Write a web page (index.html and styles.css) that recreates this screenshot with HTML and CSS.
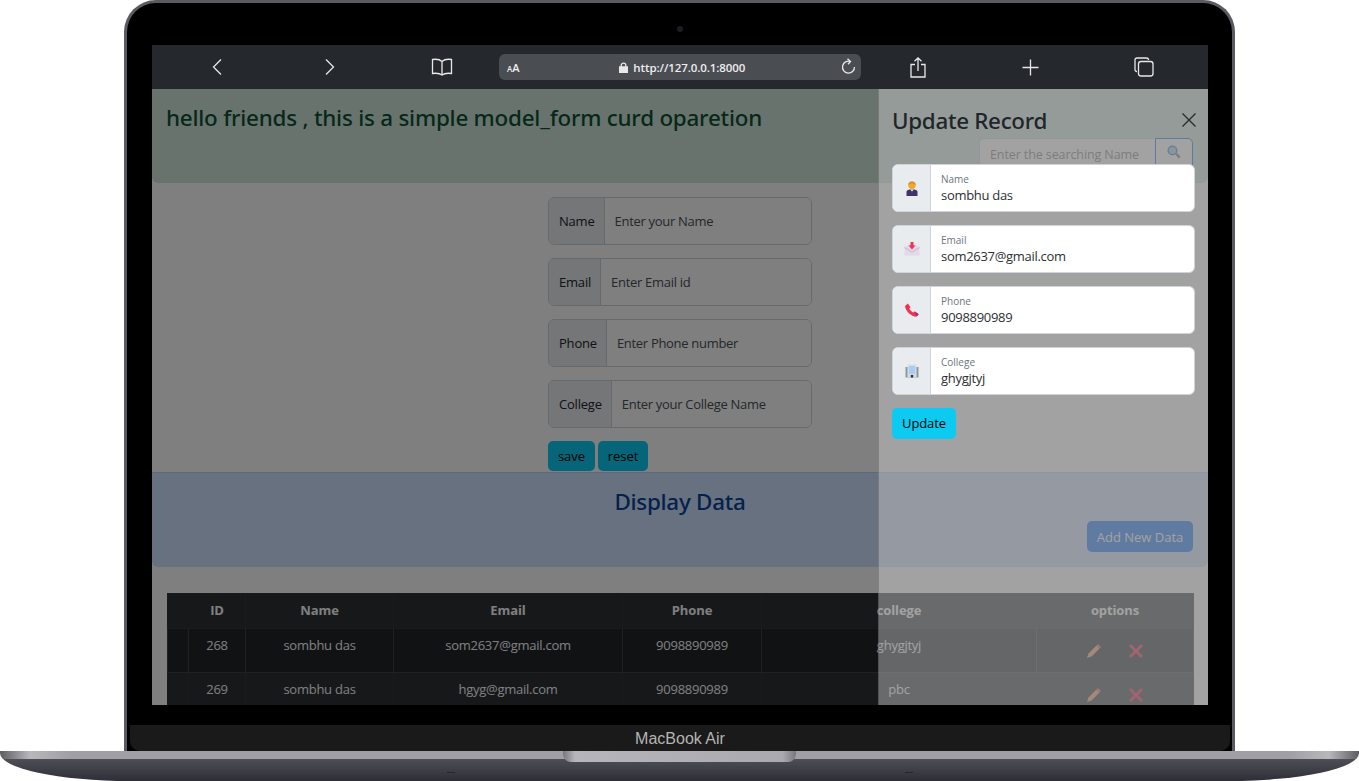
FILE: index.html
```html
<!DOCTYPE html>
<html>
<head>
    <title>Model form curd</title>
    <meta charset="UTF-8">
    <meta name="viewport" content="width=device-width, initial-scale=1.0">
    <link rel="stylesheet" href="styles.css">
</head>
<body>
<div class="laptop">
  <div class="lid">
    <div class="top-bezel"><span class="camera"></span></div>
    <div class="screen">
      <div class="toolbar">
        <div class="tool"><svg width="12" height="18" viewBox="0 0 12 18"><path d="M10 1.500 2.500 9 10 16.500"/></svg></div>
        <div class="tool"><svg width="12" height="18" viewBox="0 0 12 18"><path d="M2 1.500 9.500 9 2 16.500"/></svg></div>
        <div class="tool book"><svg width="22" height="18" viewBox="0 0 22 18"><path d="M11 3.500C9 1.500 5 1 1.500 1.500V15.500C5 15 9 15.500 11 17C13 15.500 17 15 20.500 15.500V1.500C17 1 13 1.500 11 3.500ZM11 3.500V17"/></svg></div>
        <div class="urlbar">
          <span class="aa"><small>A</small>A</span>
          <span class="url"><svg width="9" height="11" viewBox="0 0 9 11"><path class="solid" d="M0.500 5H8.500V10.500H0.500Z"/><path d="M2.200 5V3.200C2.200 0.500 6.800 0.500 6.800 3.200V5"/></svg>http://127.0.0.1:8000</span>
          <svg width="15" height="18" viewBox="0 0 15 18"><path d="M9.500 3.500A6 6 0 1 0 13.500 9"/><path d="M6.500 0.800 9.500 3.500 7 6.300"/></svg>
        </div>
        <div class="tool"><svg width="16" height="21" viewBox="0 0 16 21"><path d="M5 7.500H1V20H15V7.500H11M8 14V1M4.500 4.300 8 1 11.500 4.300"/></svg></div>
        <div class="tool"><svg width="17" height="17" viewBox="0 0 17 17"><path d="M8.500 0.500V16.500M0.500 8.500H16.500"/></svg></div>
        <div class="tool"><svg width="20" height="20" viewBox="0 0 20 20"><path d="M3 14.500C1.500 14.500 1 13.500 1 12.500V3C1 1.800 1.800 1 3 1H12.500C13.500 1 14.500 1.500 14.500 3"/><rect x="4.500" y="4.500" width="14.500" height="14.500" rx="2.500"/></svg></div>
      </div>

      <div class="page">
        <div class="alert-success">
          <h2 class="site-title">hello friends , this is a simple model_form curd oparetion</h2>
          <form class="search-form">
            <input class="search-input" type="text" placeholder="Enter the searching Name">
            <button class="search-btn" type="button">
              <svg width="14" height="14" viewBox="0 0 14 14"><path fill="#8a6a4a" d="M8.500 9.500 10 8l3.500 3.800-1.700 1.700z"/><circle cx="5.500" cy="5.500" r="5" fill="#2f7fd0"/><circle cx="5.500" cy="5.500" r="3.600" fill="#9fd6f5"/></svg>
            </button>
          </form>
        </div>

        <form class="add-form">
          <div class="input-group"><span class="input-label">Name</span><input type="text" placeholder="Enter your Name"></div>
          <div class="input-group"><span class="input-label">Email</span><input type="text" placeholder="Enter Email id"></div>
          <div class="input-group"><span class="input-label">Phone</span><input type="text" placeholder="Enter Phone number"></div>
          <div class="input-group"><span class="input-label">College</span><input type="text" placeholder="Enter your College Name"></div>
          <div class="form-btns">
            <button class="btn-info" type="button">save</button>
            <button class="btn-info reset" type="button">reset</button>
          </div>
        </form>

        <div class="alert-primary">
          <h3 class="display-title">Display Data</h3>
          <div class="add-row"><button class="btn-primary" type="button">Add New Data</button></div>
        </div>

        <div class="table-wrap">
          <table class="data-table">
            <colgroup>
              <col class="c0"><col class="c1"><col class="c2"><col class="c3"><col class="c4"><col class="c5"><col class="c6">
            </colgroup>
            <thead>
              <tr><th></th><th>ID</th><th>Name</th><th>Email</th><th>Phone</th><th>college</th><th>options</th></tr>
            </thead>
            <tbody>
              <tr class="odd">
                <td></td><td>268</td><td>sombhu das</td><td>som2637@gmail.com</td><td>9098890989</td><td>ghygjtyj</td>
                <td class="opts">
                  <svg width="16" height="16" viewBox="0 0 16 16"><path fill="#ffa860" d="M1 15 2.500 10.500 10.500 2.500 13.500 5.500 5.500 13.500z"/><path fill="#ff5a80" d="M10.500 2.500 12 1 15 4 13.500 5.500z"/></svg>
                  <svg width="16" height="16" viewBox="0 0 16 16"><path class="cross" d="M2 2 14 14M14 2 2 14"/></svg>
                </td>
              </tr>
              <tr>
                <td></td><td>269</td><td>sombhu das</td><td>hgyg@gmail.com</td><td>9098890989</td><td>pbc</td>
                <td class="opts">
                  <svg width="16" height="16" viewBox="0 0 16 16"><path fill="#ffa860" d="M1 15 2.500 10.500 10.500 2.500 13.500 5.500 5.500 13.500z"/><path fill="#ff5a80" d="M10.500 2.500 12 1 15 4 13.500 5.500z"/></svg>
                  <svg width="16" height="16" viewBox="0 0 16 16"><path class="cross" d="M2 2 14 14M14 2 2 14"/></svg>
                </td>
              </tr>
            </tbody>
          </table>
        </div>

        <div class="backdrop"></div>

        <aside class="offcanvas">
          <div class="offcanvas-head">
            <h4 class="offcanvas-title">Update Record</h4>
            <svg class="close-x" width="14" height="14" viewBox="0 0 14 14"><path d="M0.500 0.500 13.500 13.500M13.500 0.500 0.500 13.500"/></svg>
          </div>
          <form class="update-form">
            <div class="field">
              <span class="field-icon"><svg width="12" height="15" viewBox="0 0 12 15"><path fill="#3f3560" d="M0.500 15V11C0.500 9 3 8.500 6 8.500S11.500 9 11.500 11V15z"/><path fill="#e8edf5" d="M4.500 8.500H7.500L6 11z"/><path fill="#5a2a90" d="M5.400 10H6.600L6.800 13.500 6 14.500 5.200 13.500z"/><circle cx="6" cy="4.200" r="3.700" fill="#f0a82c"/><path fill="#d9902a" d="M2.300 4C2.300 1.500 4 0.500 6 0.500S9.700 1.500 9.700 4C8.500 3 7 2.500 6 2.500S3.500 3 2.300 4z"/></svg></span>
              <label class="field-body"><span class="field-label">Name</span><input type="text" value="sombhu das"></label>
            </div>
            <div class="field">
              <span class="field-icon"><svg width="16" height="14" viewBox="0 0 16 14"><path fill="#e3d8e8" d="M0.500 5 8 1.500 15.500 5V13.500H0.500z"/><path fill="none" stroke="#c5b8d0" d="M0.500 5.500 8 10 15.500 5.500"/><path fill="#f0325a" d="M6.500 0H9.500V3.500H11.500L8 7.500 4.500 3.500H6.500z"/></svg></span>
              <label class="field-body"><span class="field-label">Email</span><input type="text" value="som2637@gmail.com"></label>
            </div>
            <div class="field">
              <span class="field-icon"><svg width="14" height="14" viewBox="0 0 14 14"><path fill="#f5304f" d="M0 3 2.800 0.500 5.600 4.200 4.300 5.600C5 7.200 6.500 8.800 8.300 9.600L9.800 8.300 13.700 11.200 11.500 13.700C6 13.500 0.500 8 0 3z"/><path fill="#9a2a9a" d="M10.800 9.200 13.700 11.200 12.200 13 9.800 10.200z"/></svg></span>
              <label class="field-body"><span class="field-label">Phone</span><input type="text" value="9098890989"></label>
            </div>
            <div class="field">
              <span class="field-icon"><svg width="14" height="14" viewBox="0 0 14 14"><path fill="#8f98a2" d="M0.500 3H13.500V13.500H0.500z"/><path fill="#d5dce3" d="M2.500 0.500H11.500V13.500H2.500z"/><path fill="#a9cdf0" d="M4 2H10V10H4z"/><path fill="#2a2e35" d="M5.800 11H8.200V13.500H5.800z"/></svg></span>
              <label class="field-body"><span class="field-label">College</span><input type="text" value="ghygjtyj"></label>
            </div>
            <button class="btn-update" type="button">Update</button>
          </form>
        </aside>
      </div>
    </div>
    <div class="chin"><span>MacBook Air</span></div>
  </div>
  <div class="base"><span class="notch"></span></div>
</div>
</body>
</html>
```

FILE: styles.css
```css
* {
  box-sizing: border-box;
}
html, body {
  margin: 0;
  background: #fff;
}
body {
  font-family: "Open Sans", "Noto Sans", sans-serif;
  overflow: hidden;
}
button, input {
  font-family: inherit;
}

/* laptop frame */
.laptop {
  width: 1359px;
  height: 781px;
  overflow: hidden;
}
.lid {
  width: 1111px;
  height: 751px;
  margin-left: 124px;
  padding: 0 24px 0 25px;
  background: #000;
  border: 3px solid #5a5b60;
  border-bottom: none;
  border-radius: 32px 32px 0 0;
}
.top-bezel {
  height: 42px;
  display: flex;
  justify-content: center;
  padding-top: 23px;
}
.camera {
  width: 6px;
  height: 6px;
  border-radius: 50%;
  background: #1c1c22;
}
.screen {
  width: 1056px;
  height: 660px;
  overflow: hidden;
}
.chin {
  height: 26px;
  margin: 20px -22px 0 -22px;
  background: #1a1a1a;
  border-radius: 0 0 10px 10px;
  text-align: center;
  color: #b4b4b4;
  font-family: "Liberation Sans", sans-serif;
  font-size: 16px;
  line-height: 28px;
}
.base {
  height: 30px;
  display: flex;
  justify-content: center;
  background:
    linear-gradient(#26262c, #26262c) 447px 21px / 8px 1px no-repeat,
    linear-gradient(#26262c, #26262c) 905px 21px / 8px 1px no-repeat,
    linear-gradient(90deg, #5c5c62 0, #b8b8bb 30px, #a0a0a4 70px, #a0a0a4 1289px, #b8b8bb 1329px, #5c5c62 100%) 0 0 / 100% 8px no-repeat,
    linear-gradient(#5a5b62, #2d2e36);
  border-radius: 0 0 130px 130px / 0 0 28px 28px;
}
.notch {
  width: 233px;
  height: 11px;
  background: linear-gradient(90deg, #77777c, #b5b5ba 12px, #a9a9ae 220px, #77777c);
  border-radius: 0 0 8px 8px;
}

/* safari bar */
.toolbar {
  height: 44px;
  padding: 0 8px;
  display: grid;
  grid-template-columns: repeat(3, 113px) 362px repeat(3, 113px);
  align-items: center;
  background: #25292d;
}
.toolbar svg {
  display: block;
  fill: none;
  stroke: #e8e8e8;
  stroke-width: 1.300;
}
.toolbar svg .solid {
  fill: #e8e8e8;
}
.tool {
  display: flex;
  justify-content: center;
}
.tool.book {
  padding-right: 2px;
}
.urlbar {
  height: 26px;
  padding: 0 5px 0 8px;
  display: flex;
  align-items: center;
  justify-content: space-between;
  background: #4a4d52;
  border-radius: 6px;
  color: #eee;
}
.aa {
  font-size: 11px;
  font-weight: 600;
}
.aa small {
  font-size: 8px;
}
.url {
  display: flex;
  align-items: center;
  gap: 5px;
  margin-left: 4px;
  font-size: 11.500px;
  font-weight: 600;
  letter-spacing: -0.1px;
}

/* the page in the browser */
.page {
  position: relative;
  height: 616px;
  background: #fff;
  overflow: hidden;
  font-size: 13px;
  color: #212529;
}
.alert-success {
  height: 94px;
  padding: 14px 15px 0 14px;
  background: #d1e7dd;
  border-radius: 0 0 6px 6px;
  display: flex;
  flex-direction: column;
}
.site-title {
  margin: 0;
  font-family: "Noto Sans", sans-serif;
  font-size: 22.400px;
  font-weight: 500;
  line-height: 30px;
  letter-spacing: -0.22px;
  color: #0f5132;
}
.search-form {
  display: flex;
  align-self: flex-end;
  margin-top: 5px;
}
.search-input {
  width: 176px;
  height: 32px;
  padding: 0 10px;
  border: 1px solid #ced4da;
  border-right: none;
  border-radius: 5px 0 0 5px;
  font-size: 12.500px;
  letter-spacing: -0.1px;
}
.search-btn {
  width: 38px;
  height: 32px;
  padding: 0;
  border: 1px solid #0d6efd;
  border-radius: 0 5px 5px 0;
  background: #fff;
}

.add-form {
  width: 264px;
  height: 289px;
  margin-left: 396px;
  padding-top: 14px;
}
.input-group {
  height: 48px;
  margin-bottom: 13px;
  display: flex;
  border: 1px solid #ced4da;
  border-radius: 6px;
  overflow: hidden;
}
.input-label {
  padding: 0 9px 0 10px;
  display: flex;
  align-items: center;
  background: #e9ecef;
  border-right: 1px solid #ced4da;
  letter-spacing: -0.2px;
}
.input-group input {
  flex: 1;
  min-width: 0;
  padding: 0 10px;
  border: none;
  font-size: 13px;
  letter-spacing: -0.3px;
}
.input-group input::placeholder {
  color: #495057;
}
.form-btns {
  display: flex;
  gap: 3px;
}
.btn-info {
  width: 47px;
  height: 30px;
  padding: 0;
  border: none;
  border-radius: 5px;
  background: #0dcaf0;
  color: #000;
  font-size: 13px;
}
.btn-info.reset {
  width: 50px;
}

.alert-primary {
  height: 95px;
  padding: 15px 15px 0;
  background: #cfe2ff;
  border-top: 1px solid #b6d4fe;
  border-radius: 0 0 6px 6px;
}
.display-title {
  margin: 0;
  text-align: center;
  font-family: "Noto Sans", sans-serif;
  font-size: 22.400px;
  font-weight: 500;
  line-height: 28px;
  letter-spacing: -0.25px;
  color: #084298;
}
.add-row {
  display: flex;
  justify-content: flex-end;
  margin-top: 5px;
}
.btn-primary {
  width: 106px;
  height: 31px;
  padding: 0;
  border: none;
  border-radius: 5px;
  background: #0d6efd;
  color: #fff;
  font-size: 13px;
}

.table-wrap {
  margin: 26px 15px 0;
}
.data-table {
  width: 1026px;
  table-layout: fixed;
  border-collapse: collapse;
  background: #2c3034;
  color: #fff;
  text-align: center;
}
.c0 { width: 21px; }
.c1 { width: 57px; }
.c2 { width: 148px; }
.c3 { width: 229px; }
.c4 { width: 139px; }
.c5 { width: 275px; }
.c6 { width: 157px; }
.data-table th,
.data-table td {
  border: 1px solid #33373a;
}
.data-table th {
  height: 35px;
  padding: 0 0 2px;
  font-size: 13px;
  font-weight: 700;
  letter-spacing: -0.1px;
}
.data-table th:first-child {
  border-right-color: transparent;
}
.data-table td {
  height: 44px;
  padding: 7px 0 0;
  vertical-align: top;
  font-size: 13px;
  letter-spacing: -0.25px;
}
.data-table .odd td {
  background: #212529;
  border-color: #3e4246;
}
.data-table td.opts {
  padding-top: 14px;
}
.opts svg + svg {
  margin-left: 23px;
}
.cross {
  fill: none;
  stroke: #ff1a4a;
  stroke-width: 2.800;
}

/* offcanvas + dim */
.backdrop {
  position: absolute;
  inset: 0;
  background: rgba(0, 0, 0, 0.5);
}
.offcanvas {
  position: absolute;
  top: 0;
  right: 0;
  bottom: 0;
  width: 330px;
  padding: 0 13px 0 13px;
  background: rgba(205, 205, 205, 0.455);
  border-left: 1px solid rgba(0, 0, 0, 0.2);
}
.offcanvas-head {
  height: 75px;
  padding-top: 16px;
  display: flex;
  justify-content: space-between;
}
.offcanvas-title {
  margin: 0;
  font-family: "Noto Sans", sans-serif;
  font-size: 22.400px;
  font-weight: 500;
  line-height: 32px;
  letter-spacing: -0.3px;
  color: #212529;
}
.close-x {
  margin: 8px -1px 0 0;
  fill: none;
  stroke: #2a2c2e;
  stroke-width: 1.400;
}
.update-form {
  display: flex;
  flex-direction: column;
  gap: 13px;
}
.field {
  height: 48px;
  display: flex;
  background: #fff;
  border: 1px solid #ced4da;
  border-radius: 6px;
  overflow: hidden;
}
.field-icon {
  width: 38px;
  display: flex;
  align-items: center;
  justify-content: center;
  background: #e9ecef;
  border-right: 1px solid #ced4da;
}
.field-body {
  flex: 1;
  padding: 7px 10px 0;
  display: flex;
  flex-direction: column;
}
.field-label {
  font-size: 10px;
  line-height: 14px;
  color: #6c757d;
}
.field-body input {
  padding: 0;
  border: none;
  outline: none;
  font-size: 13px;
  line-height: 18px;
  letter-spacing: -0.3px;
  color: #2b2f33;
}
.btn-update {
  width: 64px;
  height: 31px;
  padding: 0 0 2px;
  border: none;
  border-radius: 5px;
  background: #0dcaf0;
  color: #000;
  font-size: 13px;
  letter-spacing: -0.1px;
}
```
